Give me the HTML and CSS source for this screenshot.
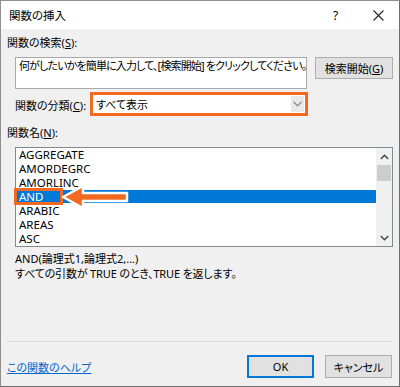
FILE: index.html
```html
<!DOCTYPE html>
<html lang="ja">
<head>
<meta charset="utf-8">
<title>関数の挿入</title>
<link rel="stylesheet" href="styles.css">
</head>
<body>
<div class="dialog">
  <div class="titlebar">
    <span class="title">関数の挿入</span>
    <span class="tb-help">?</span>
    <span class="tb-close">
      <svg width="11" height="11" viewBox="0 0 11 11"><path d="M0.5 0.5 L10.5 10.5 M10.5 0.5 L0.5 10.5" stroke="#222" stroke-width="1.1" fill="none"/></svg>
    </span>
  </div>
  <div class="content">
    <div class="label first">関数の検索(<u>S</u>):</div>
    <div class="search-row">
      <div class="search-input">何がしたいかを簡単に入力して、[検索開始] をクリックしてください。</div>
      <div class="btn search-btn">検索開始(<u>G</u>)</div>
    </div>
    <div class="cat-row">
      <span class="cat-label">関数の分類(<u>C</u>):</span>
      <div class="select-frame">
        <span class="select-text">すべて表示</span>
        <span class="select-arrow">
          <svg width="9" height="6" viewBox="0 0 9 6"><path d="M0.5 0.8 L4.5 4.8 L8.5 0.8" stroke="#777" stroke-width="1.1" fill="none"/></svg>
        </span>
      </div>
    </div>
    <div class="label names">関数名(<u>N</u>):</div>
    <div class="listbox">
      <div class="rows">
        <div class="row">AGGREGATE</div>
        <div class="row">AMORDEGRC</div>
        <div class="row">AMORLINC</div>
        <div class="row selected">AND</div>
        <div class="row">ARABIC</div>
        <div class="row">AREAS</div>
        <div class="row">ASC</div>
      </div>
      <div class="scrollbar">
        <span class="sb-arrow">
          <svg width="9" height="6" viewBox="0 0 9 6"><path d="M0.8 5 L4.5 1.3 L8.2 5" stroke="#444" stroke-width="1.4" fill="none"/></svg>
        </span>
        <span class="sb-thumb"></span>
        <span class="sb-track"></span>
        <span class="sb-arrow">
          <svg width="9" height="6" viewBox="0 0 9 6"><path d="M0.8 1 L4.5 4.7 L8.2 1" stroke="#444" stroke-width="1.4" fill="none"/></svg>
        </span>
      </div>
      <span class="highlight-box"></span>
      <svg class="callout-arrow" width="72" height="28" viewBox="0 0 72 28">
        <polygon points="3,14 23,3 23,10 67,10 67,18 23,18 23,25" fill="#f26a21" stroke="#fff" stroke-width="2.5" stroke-linejoin="round"/>
      </svg>
    </div>
    <div class="desc">
      <div class="syntax">AND(論理式1,論理式2,...)</div>
      <div class="explain">すべての引数が TRUE のとき、TRUE を返します。</div>
    </div>
    <div class="separator"></div>
    <div class="footer">
      <a class="help-link" href="#">この関数のヘルプ</a>
      <div class="btn ok-btn">OK</div>
      <div class="btn cancel-btn">キャンセル</div>
    </div>
  </div>
</div>
</body>
</html>
```

FILE: styles.css
```css
html, body {
  margin: 0;
  padding: 0;
  background: #ffffff;
}

body {
  font-family: "Noto Sans", "Noto Sans CJK JP", sans-serif;
  font-size: 11px;
  font-feature-settings: "palt";
  color: #000;
}

.dialog {
  width: 400px;
  height: 387px;
  box-sizing: border-box;
  border: 1px solid #8f8f8f;
  border-right-color: #6e6e6e;
  border-bottom-color: #6e6e6e;
  background: #f0f0f0;
  display: flex;
  flex-direction: column;
}

.titlebar {
  height: 28px;
  flex: none;
  background: #ffffff;
  display: flex;
  align-items: center;
  padding-left: 8px;
}

.title {
  font-size: 11.5px;
  flex: 1;
}

.tb-help {
  width: 43px;
  text-align: center;
  font-size: 12px;
}

.tb-close {
  width: 42px;
  height: 28px;
  display: flex;
  align-items: center;
  justify-content: center;
}

.tb-close svg {
  display: block;
}

.content {
  flex: 1;
  display: flex;
  flex-direction: column;
  padding: 0 6px 8px 6px;
}

.label {
  line-height: 14px;
  height: 14px;
  white-space: nowrap;
}

.label.first {
  margin-top: 7px;
}

u {
  text-decoration: underline;
  text-underline-offset: 1px;
}

.search-row {
  display: flex;
  align-items: flex-start;
  margin-top: 7px;
  margin-left: 8px;
  gap: 8px;
}

.search-input {
  width: 292px;
  height: 32px;
  box-sizing: border-box;
  border: 1px solid #a9a9a9;
  background: #ffffff;
  padding: 1px 0 0 3px;
  line-height: 14px;
  white-space: nowrap;
  overflow: hidden;
  letter-spacing: -0.85px;
}

.btn {
  box-sizing: border-box;
  background: #e1e1e1;
  border: 1px solid #adadad;
  display: flex;
  align-items: center;
  justify-content: center;
  white-space: nowrap;
}

.search-btn {
  width: 78px;
  height: 22px;
}

.cat-row {
  display: flex;
  align-items: center;
  margin-top: 3px;
  margin-left: 8px;
  height: 24px;
}

.cat-label {
  width: 75px;
  flex: none;
  white-space: nowrap;
  padding-top: 2px;
}

.select-frame {
  width: 218px;
  height: 24px;
  box-sizing: border-box;
  border: 3px solid #f26a21;
  background: #ffffff;
  display: flex;
  align-items: center;
  padding-left: 3px;
  padding-right: 1px;
}

.select-text {
  flex: 1;
}

.select-arrow {
  width: 13px;
  height: 16px;
  background: #e8e8e8;
  display: flex;
  align-items: center;
  justify-content: center;
}

.select-arrow svg {
  display: block;
}

.label.names {
  margin-top: 10px;
}

.listbox {
  position: relative;
  margin-top: 7px;
  margin-left: 8px;
  width: 378px;
  height: 100px;
  box-sizing: border-box;
  border: 1px solid #828790;
  background: #ffffff;
  display: flex;
}

.rows {
  flex: 1;
  display: flex;
  flex-direction: column;
}

.row {
  height: 14px;
  line-height: 14px;
  padding-left: 3px;
  font-size: 11.5px;
  white-space: nowrap;
}

.row.selected {
  background: #0078d7;
  color: #ffffff;
  margin-left: 1px;
  padding-left: 2px;
  height: 13px;
  line-height: 13px;
  margin-bottom: 1px;
}

.scrollbar {
  width: 16px;
  flex: none;
  background: #f0f0f0;
  display: flex;
  flex-direction: column;
  align-items: center;
}

.sb-arrow {
  height: 17px;
  width: 16px;
  display: flex;
  align-items: center;
  justify-content: center;
}

.sb-arrow svg {
  display: block;
}

.sb-thumb {
  width: 14px;
  height: 16px;
  background: #cdcdcd;
}

.sb-track {
  flex: 1;
}

.highlight-box {
  position: absolute;
  left: -2px;
  top: 40px;
  width: 49px;
  height: 17px;
  box-sizing: border-box;
  border: 3px solid #f26a21;
}

.callout-arrow {
  position: absolute;
  left: 44px;
  top: 35px;
  display: block;
}

.desc {
  margin-top: 4px;
  margin-left: 8px;
  white-space: nowrap;
}

.syntax {
  line-height: 15px;
}

.explain {
  line-height: 15px;
  letter-spacing: -0.15px;
}

.separator {
  margin-top: auto;
  height: 1px;
  background: #dadada;
}

.footer {
  display: flex;
  align-items: center;
  margin-top: 13px;
  height: 23px;
  padding-right: 1px;
}

.help-link {
  flex: 1;
  color: #0066cc;
  text-decoration: underline;
}

.ok-btn {
  width: 67px;
  height: 23px;
  border: 2px solid #0078d7;
  margin-right: 11px;
}

.cancel-btn {
  width: 67px;
  height: 23px;
}
```
